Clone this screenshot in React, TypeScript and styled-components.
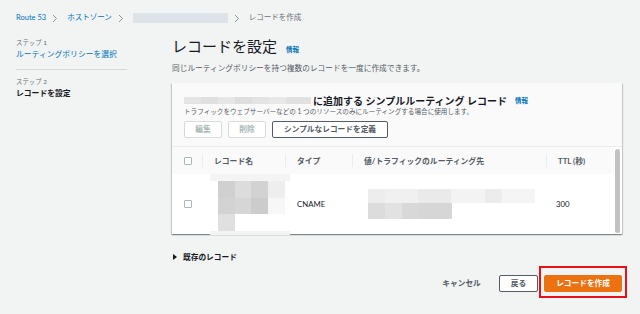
import React from "react";
import styled, { createGlobalStyle } from "styled-components";

const GlobalStyle = createGlobalStyle`
  body {
    margin: 0;
    background: #f2f3f3;
    font-family: Lato, "Noto Sans CJK JP", sans-serif;
    color: #16191f;
  }
`;

const Page = styled.div`
  width: 640px;
  height: 314px;
  box-sizing: border-box;
  padding: 11px 0 0 16px;
  overflow: hidden;
`;

const Breadcrumb = styled.nav`
  display: flex;
  align-items: center;
  height: 14px;
  font-size: 7.5px;
  line-height: 14px;
`;

const Crumb = styled.span<{ $link?: boolean }>`
  color: ${(p) => (p.$link ? "#0073bb" : "#687078")};
`;

const ChevronIcon = styled.svg`
  width: 6px;
  height: 9px;
  margin: 0 9px 0 6px;
`;

const Body = styled.div`
  display: flex;
  margin-top: 9px;
`;

const SideNav = styled.aside`
  width: 111px;
  padding-top: 4px;
`;

const StepLabel = styled.div`
  font-size: 6.4px;
  line-height: 10px;
  color: #687078;
`;

const StepText = styled.div<{ $active?: boolean }>`
  font-size: 7.8px;
  line-height: 12px;
  color: ${(p) => (p.$active ? "#16191f" : "#0073bb")};
  font-weight: ${(p) => (p.$active ? 700 : 400)};
`;

const Divider = styled.hr`
  border: 0;
  border-top: 1px solid #d5dbdb;
  margin: 9px 0 7px;
`;

const Main = styled.main`
  width: 450px;
  margin-left: 45px;
`;

const TitleRow = styled.div`
  display: flex;
  align-items: baseline;
  height: 24px;
`;

const Title = styled.h1`
  margin: 0;
  font-size: 15px;
  line-height: 24px;
  font-weight: 400;
  color: #16191f;
`;

const Info = styled.span<{ $gap: number }>`
  margin-left: ${(p) => p.$gap}px;
  font-size: 6.5px;
  font-weight: 700;
  color: #0073bb;
`;

const Subtitle = styled.p`
  margin: 4px 0 0;
  font-size: 7.7px;
  line-height: 12px;
  color: #545b64;
`;

const Container = styled.section`
  margin-top: 9px;
  background: #fff;
  box-shadow: 0 1px 1px 0 rgba(0, 28, 36, 0.3), 1px 1px 1px 0 rgba(0, 28, 36, 0.15),
    -1px 1px 1px 0 rgba(0, 28, 36, 0.15);
`;

const ContainerHeader = styled.header`
  background: #fafafa;
  padding: 10px 12px 8px;
  border-bottom: 1px solid #eaeded;
`;

const HeaderTitle = styled.div`
  display: flex;
  align-items: center;
  height: 14px;
  font-size: 10px;
  font-weight: 700;
  color: #16191f;
`;

const HeaderTitleText = styled.span`
  margin-left: 2px;
`;

const HeaderDesc = styled.div`
  font-size: 6.6px;
  line-height: 9px;
  color: #545b64;
`;

const ButtonRow = styled.div`
  display: flex;
  gap: 6px;
  margin-top: 5px;
`;

const Button = styled.button<{ $variant?: "normal" | "disabled" | "primary" }>`
  height: 17px;
  padding: 0 ${(p) => (p.$variant === "disabled" ? 10 : 11)}px;
  min-width: ${(p) => (p.$variant === "disabled" ? 38 : 0)}px;
  border-radius: 2px;
  font-family: inherit;
  font-size: 7.7px;
  font-weight: 700;
  line-height: 15px;
  border: 1px solid
    ${(p) =>
      p.$variant === "disabled" ? "#d5dbdb" : p.$variant === "primary" ? "#ec7211" : "#545b64"};
  background: ${(p) => (p.$variant === "primary" ? "#ec7211" : "#fff")};
  color: ${(p) =>
    p.$variant === "disabled" ? "#aab7b8" : p.$variant === "primary" ? "#fff" : "#545b64"};
`;

const TableWrap = styled.div`
  display: flex;
`;

const Grid = styled.div`
  width: 442px;
  display: grid;
  grid-template-columns: 30px 83px 67px 194px 68px;
  grid-template-rows: 27px 60px;
`;

const HeadCell = styled.div<{ $sep?: boolean }>`
  position: relative;
  display: flex;
  align-items: center;
  padding-left: 12px;
  background: #fafafa;
  font-size: 7.8px;
  font-weight: 700;
  color: #545b64;
  &::before {
    content: "";
    display: ${(p) => (p.$sep ? "block" : "none")};
    position: absolute;
    left: 0;
    top: 7px;
    height: 13px;
    border-left: 1px solid #eaeded;
  }
`;

const Cell = styled.div<{ $pad?: number }>`
  position: relative;
  display: flex;
  align-items: center;
  padding-left: ${(p) => p.$pad ?? 12}px;
  font-size: 7.8px;
  color: #16191f;
`;

const Checkbox = styled.span`
  width: 6px;
  height: 6px;
  border: 1px solid #aab7b8;
  border-radius: 1px;
  background: #fff;
`;

const ScrollTrack = styled.div`
  width: 8px;
  padding: 2px 2px 1px 1px;
  box-sizing: border-box;
`;

const Thumb = styled.div`
  width: 5px;
  height: 100%;
  border-radius: 3px;
  background: #c1c1c1;
`;

const NameMosaic = styled.svg`
  position: absolute;
  left: 8px;
  top: 0;
`;

const Expander = styled.div`
  display: flex;
  align-items: center;
  gap: 6px;
  margin-top: 17px;
  padding-left: 1px;
  font-size: 7.7px;
  font-weight: 700;
  line-height: 12px;
  color: #16191f;
`;

const Footer = styled.footer`
  display: flex;
  justify-content: flex-end;
  align-items: flex-start;
  margin-top: 12px;
  height: 17px;
`;

const CancelLink = styled.span`
  font-size: 7.7px;
  font-weight: 700;
  line-height: 17px;
  color: #545b64;
  margin-right: 18px;
`;

const Highlight = styled.div`
  display: flex;
  padding: 7px 3px 4px;
  margin: -9px -5px 0 1px;
  border: 2px solid #e8111a;
`;

type Rect = [number, number, number, number, string];

const Chevron = () => (
  <ChevronIcon viewBox="0 0 6 9">
    <path d="M1 1l3.5 3.5L1 8" fill="none" stroke="#879596" strokeWidth="1" />
  </ChevronIcon>
);

const Mosaic = ({ w, h, cells }: { w: number; h: number; cells: Rect[] }) => (
  <svg width={w} height={h} viewBox={`0 0 ${w} ${h}`}>
    {cells.map(([x, y, cw, ch, c], i) => (
      <rect key={i} x={x} y={y} width={cw} height={ch} fill={c} />
    ))}
  </svg>
);

const headerMosaic: Rect[] = [
  [0, 0, 17, 7, "#e4e4e4"],
  [17, 0, 17, 7, "#e0e0e0"],
  [34, 0, 17, 7, "#e6e6e6"],
  [51, 0, 17, 7, "#dedede"],
  [68, 0, 17, 7, "#e3e3e3"],
  [85, 0, 17, 7, "#e8e8e8"],
  [102, 0, 25, 7, "#e1e1e1"],
];

const nameMosaic: Rect[] = [
  [0, 0, 80, 7, "#f4f4f4"],
  [8, 7, 17, 17, "#d0d0d0"],
  [25, 7, 16, 17, "#dcdcdc"],
  [41, 7, 17, 17, "#d2d2d2"],
  [58, 7, 17, 17, "#eeeeee"],
  [8, 24, 17, 16, "#d3d3d3"],
  [25, 24, 16, 16, "#d6d6d6"],
  [41, 24, 17, 16, "#cccccc"],
  [58, 24, 17, 16, "#f7f7f7"],
  [8, 40, 17, 17, "#e0e0e0"],
  [0, 57, 80, 4, "#f3f3f3"],
];

const valueMosaic: Rect[] = [
  [0, 0, 17, 14, "#ededed"],
  [17, 0, 33, 14, "#f0f0f0"],
  [50, 0, 33, 14, "#eaeaea"],
  [83, 0, 34, 14, "#f3f3f3"],
  [117, 0, 17, 14, "#ececec"],
  [134, 0, 33, 14, "#f5f5f5"],
  [0, 14, 17, 16, "#dcdcdc"],
  [17, 14, 17, 16, "#e2e2e2"],
  [34, 14, 17, 16, "#d8d8d8"],
  [51, 14, 33, 16, "#d6d6d6"],
];

export default function App() {
  return (
    <Page>
      <GlobalStyle />
      <Breadcrumb>
        <Crumb $link>Route 53</Crumb>
        <Chevron />
        <Crumb $link>ホストゾーン</Crumb>
        <Chevron />
        <Mosaic w={95} h={10} cells={[[0, 0, 95, 10, "#dde3e8"]]} />
        <Chevron />
        <Crumb>レコードを作成</Crumb>
      </Breadcrumb>
      <Body>
        <SideNav>
          <StepLabel>ステップ 1</StepLabel>
          <StepText>ルーティングポリシーを選択</StepText>
          <Divider />
          <StepLabel>ステップ 2</StepLabel>
          <StepText $active>レコードを設定</StepText>
        </SideNav>
        <Main>
          <TitleRow>
            <Title>レコードを設定</Title>
            <Info $gap={9}>情報</Info>
          </TitleRow>
          <Subtitle>同じルーティングポリシーを持つ複数のレコードを一度に作成できます。</Subtitle>
          <Container>
            <ContainerHeader>
              <HeaderTitle>
                <Mosaic w={127} h={7} cells={headerMosaic} />
                <HeaderTitleText>に追加する シンプルルーティング レコード</HeaderTitleText>
                <Info $gap={8}>情報</Info>
              </HeaderTitle>
              <HeaderDesc>
                トラフィックをウェブサーバーなどの 1 つのリソースのみにルーティングする場合に使用します。
              </HeaderDesc>
              <ButtonRow>
                <Button $variant="disabled">編集</Button>
                <Button $variant="disabled">削除</Button>
                <Button>シンプルなレコードを定義</Button>
              </ButtonRow>
            </ContainerHeader>
            <TableWrap>
              <Grid>
                <HeadCell>
                  <Checkbox />
                </HeadCell>
                <HeadCell $sep>レコード名</HeadCell>
                <HeadCell $sep>タイプ</HeadCell>
                <HeadCell $sep>値/トラフィックのルーティング先</HeadCell>
                <HeadCell $sep>TTL (秒)</HeadCell>
                <Cell>
                  <Checkbox />
                </Cell>
                <Cell>
                  <NameMosaic width={80} height={61} viewBox="0 0 80 61">
                    {nameMosaic.map(([x, y, cw, ch, c], i) => (
                      <rect key={i} x={x} y={y} width={cw} height={ch} fill={c} />
                    ))}
                  </NameMosaic>
                </Cell>
                <Cell>CNAME</Cell>
                <Cell $pad={16}>
                  <Mosaic w={167} h={30} cells={valueMosaic} />
                </Cell>
                <Cell $pad={10}>300</Cell>
              </Grid>
              <ScrollTrack>
                <Thumb />
              </ScrollTrack>
            </TableWrap>
          </Container>
          <Expander>
            <svg width="4" height="6" viewBox="0 0 4 6">
              <path d="M0 0L4 3L0 6z" fill="#16191f" />
            </svg>
            既存のレコード
          </Expander>
          <Footer>
            <CancelLink>キャンセル</CancelLink>
            <Button>戻る</Button>
            <Highlight>
              <Button $variant="primary">レコードを作成</Button>
            </Highlight>
          </Footer>
        </Main>
      </Body>
    </Page>
  );
}
